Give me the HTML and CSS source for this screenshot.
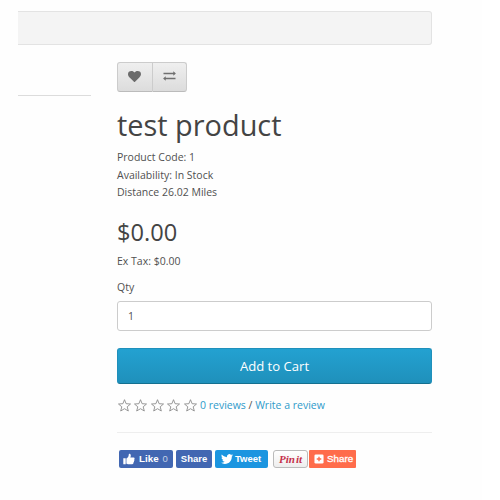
FILE: index.html
```
<!DOCTYPE html>
<html lang="en">
<head>
<meta charset="utf-8">
<title>test product</title>
<link rel="stylesheet" href="styles.css">
</head>
<body>
<svg class="defs" width="0" height="0" aria-hidden="true">
  <symbol id="star" viewBox="0 0 13 13"><path d="M6.500 .7 8.100 4.700 12.500 5 9.200 7.800 10.300 12 6.500 9.700 2.700 12 3.800 7.800 .5 5 4.900 4.700Z" fill="none" stroke="#8c8c8c" stroke-width=".9" stroke-linejoin="round"/></symbol>
</svg>
<div class="page">
  <div class="breadcrumb"></div>
  <div class="columns">
    <div class="gallery"></div>
    <main class="product">
      <div class="btn-group">
        <button class="btn" aria-label="Wish list"><svg width="13" height="13" viewBox="0 0 1792 1792"><path fill="#6b6b6b" d="M896 1664q-26 0-44-18l-624-602q-10-8-27.500-26t-55.500-65.500-68-97.500-53.500-121-23.500-138q0-220 127-344t351-124q62 0 126.500 21.500t120 58 95.500 68.500 76 68q36-36 76-68t95.500-68.500 120-58 126.500-21.500q224 0 351 124t127 344q0 221-229 450l-623 600q-18 18-44 18z"/></svg></button>
        <button class="btn" aria-label="Compare"><svg width="13" height="10" viewBox="0 0 13 10"><path d="M.5 2.500H11M2 7.500H12.500" stroke="#6f6f6f" stroke-width="1.400"/><path d="M10.300.3 12.900 2.500 10.300 4.700ZM2.700 5.300 .1 7.500 2.700 9.700Z" fill="#6f6f6f"/></svg></button>
      </div>
      <h1>test product</h1>
      <ul class="details">
        <li>Product Code: 1</li>
        <li>Availability: In Stock</li>
        <li>Distance 26.02 Miles</li>
      </ul>
      <h2>$0.00</h2>
      <div class="tax">Ex Tax: $0.00</div>
      <label class="qty" for="qty">Qty</label>
      <input id="qty" type="text" value="1">
      <button class="cart">Add to Cart</button>
      <div class="rating">
        <span class="stars">
          <svg><use href="#star"/></svg><svg><use href="#star"/></svg><svg><use href="#star"/></svg><svg><use href="#star"/></svg><svg><use href="#star"/></svg>
        </span>
        <span class="links"><a>0 reviews</a> / <a>Write a review</a></span>
      </div>
      <div class="social">
        <span class="chip like"><svg width="12" height="12" viewBox="0 0 12 12"><path fill="#fff" d="M.3 5.300H2.700V11.300H.3ZM3.400 5.500C5 4.700 5.700 3.300 5.800 1.200 5.900.3 7.800.4 7.800 2.300 7.800 3.200 7.600 3.900 7.300 4.600H10.600C11.900 4.700 11.800 6 11.200 6.300 11.700 6.800 11.500 7.800 10.900 8 11.200 8.600 10.900 9.400 10.400 9.600 10.600 10.500 10 11.200 9.200 11.200H5.500C4.500 11.200 4.200 10.800 3.400 10.700Z"/></svg><b>Like</b><i>0</i></span>
        <span class="chip fbshare"><b>Share</b></span>
        <span class="chip tweet"><svg width="12" height="12" viewBox="0 0 24 24"><path fill="#fff" d="M23.953 4.570a10 10 0 01-2.825.775 4.958 4.958 0 002.163-2.723c-.951.555-2.005.959-3.127 1.184a4.920 4.920 0 00-8.384 4.482C7.690 8.095 4.067 6.130 1.640 3.162a4.822 4.822 0 00-.666 2.475c0 1.710.870 3.213 2.188 4.096a4.904 4.904 0 01-2.228-.616v.060a4.923 4.923 0 003.946 4.827 4.996 4.996 0 01-2.212.085 4.936 4.936 0 004.604 3.417 9.867 9.867 0 01-6.102 2.105c-.390 0-.779-.023-1.170-.067a13.995 13.995 0 007.557 2.209c9.053 0 13.998-7.496 13.998-13.985 0-.210 0-.420-.015-.630A9.935 9.935 0 0024 4.590z"/></svg><b>Tweet</b></span>
        <span class="chip pin"><b>Pin</b><b>it</b></span>
        <span class="chip addshare"><svg width="10" height="10" viewBox="0 0 11 11"><rect x=".5" y=".5" width="10" height="10" rx="1.500" fill="#fff"/><path d="M5.500 3V8M3 5.500H8" stroke="#ff6c4b" stroke-width="1.500"/></svg><span>Share</span></span>
      </div>
    </main>
  </div>
</div>
</body>
</html>
```
FILE: styles.css
```
* { box-sizing: border-box; }
body {
  margin: 0;
  background: #fff;
  color: #505050;
  font: 10.5px/17.5px "Open Sans", sans-serif;
}
.defs { display: block; height: 0; }
.page {
  width: 482px;
  height: 500px;
  padding: 11px 50px 0 18px;
  background: #fefefe;
  overflow: hidden;
}
.breadcrumb {
  height: 34px;
  background: #f4f4f4;
  border: 1px solid #e3e3e3;
  border-left: 0;
  border-radius: 0 3px 3px 0;
}
.columns { display: flex; gap: 26px; padding-top: 17px; }
.gallery { width: 73px; height: 34px; border-bottom: 1px solid #dcdcdc; }
.product { width: 315px; }
.btn-group { display: flex; width: 70px; height: 30px; }
.btn {
  display: flex;
  flex: 1;
  align-items: center;
  justify-content: center;
  padding: 0 0 2px;
  border: 1px solid #ccc;
  border-bottom-color: #bbb;
  background: linear-gradient(#efefef, #dcdcdc);
}
.btn:first-child { border-radius: 3px 0 0 3px; }
.btn:last-child { border-radius: 0 3px 3px 0; border-left: 0; }
h1, h2 { margin: 0; color: #444; font-weight: 400; }
h1 { margin-top: 13px; font-size: 28.9px; line-height: 40px; }
.details { margin: 4px 0 0; padding: 0; list-style: none; }
h2 { margin-top: 15px; font-size: 23.6px; line-height: 30px; }
.tax { margin-top: 6px; }
.qty { display: block; margin-top: 9px; }
input {
  display: block;
  width: 100%;
  height: 30px;
  margin-top: 4px;
  padding: 0 10px;
  border: 1px solid #ccc;
  border-radius: 3px;
  background: #fff;
  color: #505050;
  font: inherit;
}
.cart {
  display: block;
  width: 100%;
  height: 36px;
  margin-top: 17px;
  padding: 0;
  border: 1px solid #1f90bb;
  border-bottom-color: #14708f;
  border-radius: 3px;
  background: linear-gradient(#23a1d1, #1f90bb);
  color: #fff;
  font: 13.1px/34px "Open Sans", sans-serif;
}
.rating {
  display: flex;
  height: 49px;
  padding-top: 13px;
  border-bottom: 1px solid #eee;
}
.stars { display: flex; gap: 3.6px; width: 83px; padding: 2px 0 0 .5px; }
.stars svg { flex: none; width: 13px; height: 13px; }
a { color: #2f9bca; }
.social { display: flex; margin: 17px 0 0 2px; }
.chip {
  display: flex;
  align-items: center;
  height: 18px;
  border-radius: 2px;
  color: #fff;
  font: 9.5px/18px "Liberation Sans", sans-serif;
  white-space: nowrap;
}
.like { width: 54px; padding-left: 4px; background: #4267b2; }
.like b { margin-left: 4px; font-size: 9.8px; }
.like i { margin-left: 4px; color: #c6d1e7; font-style: normal; }
.fbshare { width: 36px; margin-left: 3px; justify-content: center; background: #4267b2; }
.tweet { width: 53px; margin-left: 3px; padding-left: 6px; background: #1b95e0; }
.tweet b { margin-left: 2px; }
.pin {
  width: 35px;
  margin-left: 5px;
  justify-content: center;
  gap: 1px;
  border: 1px solid #bbb;
  border-radius: 3px;
  background: linear-gradient(#fff, #eee);
  color: #c5304a;
  font: italic 11px/16px "Liberation Serif", serif;
}
.addshare { width: 47px; margin-left: 1px; padding-left: 5px; background: #ff6c4b; border-radius: 1px; }
.addshare span { margin-left: 3px; font-size: 9.8px; -webkit-text-stroke: .3px #fff; }
```
